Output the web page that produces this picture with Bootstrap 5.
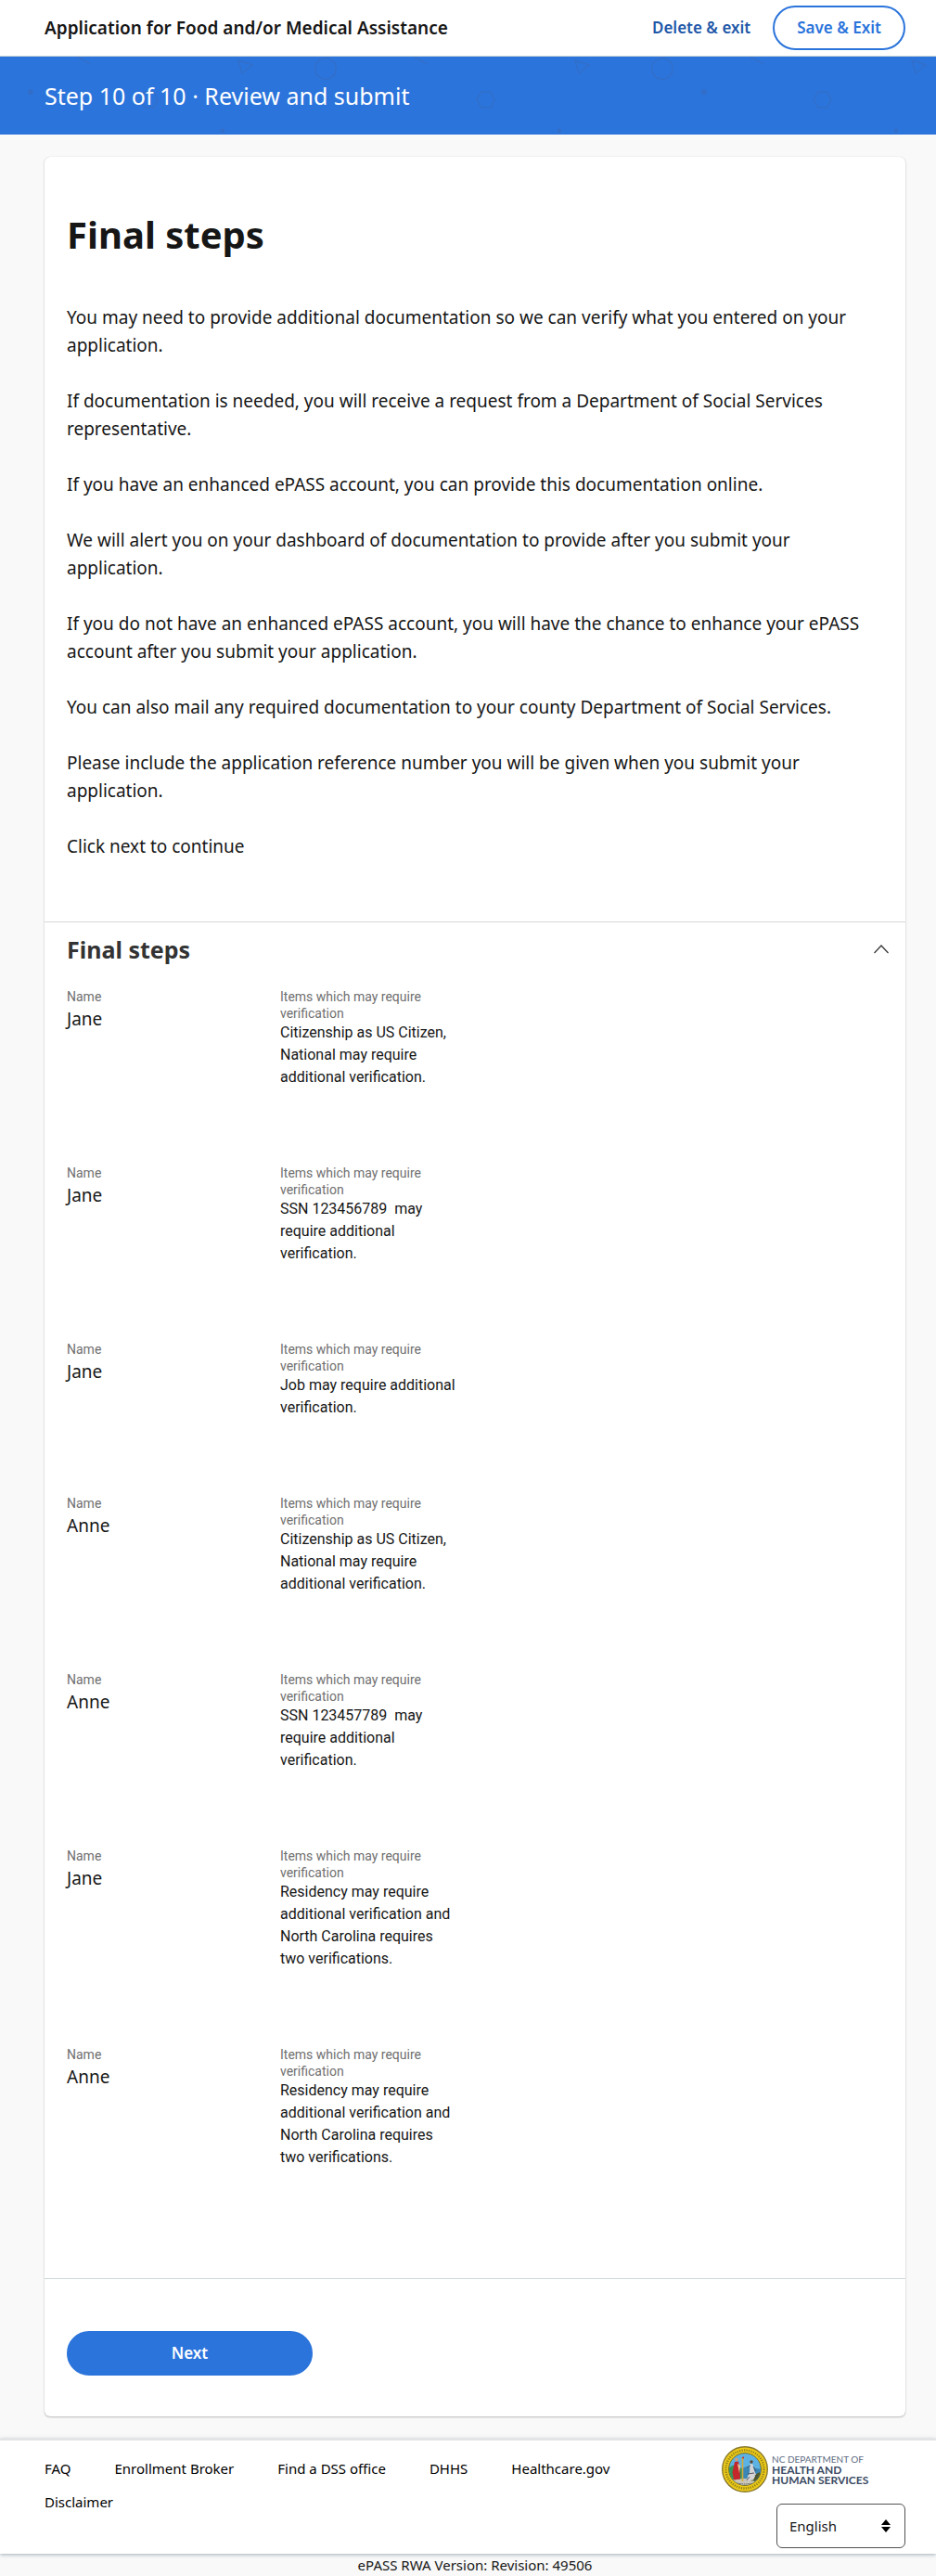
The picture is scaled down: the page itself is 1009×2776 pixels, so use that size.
<!DOCTYPE html>
<html lang="en">
<head>
<meta charset="utf-8">
<meta name="viewport" content="width=device-width, initial-scale=1">
<title>Application for Food and/or Medical Assistance</title>
<link href="https://cdn.jsdelivr.net/npm/bootstrap@5.3.0/dist/css/bootstrap.min.css" rel="stylesheet">
<style>
  :root { --brand: #2b74db; --brand-dark: #1f58a8; --ink: #161616; --rule: #cfd8d9; }
  body { font-family: "Noto Sans", sans-serif; font-size: 19px; line-height: 30px; color: var(--ink); background: #f9f9f9; }
  .page-gutter { padding-left: 48px; padding-right: 33px; }

  .app-header { min-height: 61px; border-bottom: 1px solid var(--rule); }
  .app-title { font-size: 19px; line-height: 30px; font-weight: 600; }
  .pill { height: 48px; border-radius: 24px; border: 2px solid var(--brand); font-size: 17px; line-height: 24px; font-weight: 600; padding: 0 24px; }
  .pill-outline, .pill-outline:hover { color: var(--brand); background: #fff; }
  .pill-solid { background: var(--brand); color: #fff; min-width: 265px; }
  .pill-solid:hover { background: var(--brand-dark); color: #fff; }
  .link-action { font-size: 17px; line-height: 24px; font-weight: 600; color: var(--brand-dark); text-decoration: none; }

  .step-banner { background: var(--brand); color: #fff; min-height: 84px; }
  .step-banner p { font-size: 25px; line-height: 36px; }

  .app-card { border: 0; border-radius: 6px; box-shadow: 0 1px 2px rgba(0, 0, 0, .24), 0 0 1px rgba(0, 0, 0, .2); }
  .intro { padding: 60px 24px 66px; }
  .intro h1 { font-size: 40px; line-height: 48px; font-weight: 700; margin-bottom: 50px; }
  .intro p { margin-bottom: 30px; }
  .section-steps { border-top: 1px solid #d6d6d6; padding: 9px 24px 36px; }
  .section-steps h2 { font-size: 25px; line-height: 40px; font-weight: 700; color: #333; }
  .chevron { width: 16px; margin-right: -6px; padding: 0; border: 0; background: none; }
  .entries { padding-top: 22px; }
  .entry { margin: 0 -40px 82px 0; }
  .entry > div { padding: 0 36px 0 0; }
  .entry dt { font-family: Roboto, sans-serif; font-size: 14px; line-height: 18px; font-weight: 400; color: #6f6f6f; }
  .entry dd { margin: 0; }
  .entry .detail { font-family: Roboto, sans-serif; font-size: 16px; line-height: 24px; }
  .actions { border-top: 1px solid var(--rule); padding: 56px 24px 44px; }

  .app-footer { border-top: 2px solid #e4e4e4; padding-top: 6px; padding-bottom: 6px; box-shadow: 0 1px 4px rgba(70, 100, 120, .5); }
  .footer-nav { column-gap: 47px; row-gap: 6px; padding-top: 9px; max-width: 75%; }
  .footer-nav a { font-size: 15px; line-height: 30px; color: #000; text-decoration: none; }
  .footer-side { width: 198px; row-gap: 12px; }
  .seal { width: 50px; height: 50px; }
  .dept { color: #3a4a63; font-family: Lato, sans-serif; font-size: 12px; line-height: 11px; }
  .dept .dept-top { font-size: 10px; color: #5d6b82; }
  .lang { height: 48px; border: 1px solid #525252; border-radius: 6px; font-size: 15px; color: var(--ink); background: #fff; padding: 0 13px; appearance: none; }
  .lang-wrap { width: 139px; }
  .lang-arrows { right: 15px; top: 17px; pointer-events: none; }
  .version { font-size: 15px; line-height: 24px; }
</style>
<script src="https://cdn.jsdelivr.net/npm/bootstrap@5.3.0/dist/js/bootstrap.bundle.min.js"></script>
</head>
<body>
<header class="app-header page-gutter bg-white d-flex align-items-center justify-content-between">
  <div class="app-title">Application for Food and/or Medical Assistance</div>
  <div class="d-flex align-items-center gap-4">
    <a class="link-action" href="#">Delete &amp; exit</a>
    <button type="button" class="btn pill pill-outline">Save &amp; Exit</button>
  </div>
</header>

<div class="step-banner page-gutter d-flex align-items-center position-relative">
  <svg class="position-absolute top-0 start-0 w-100 h-100" aria-hidden="true">
    <defs>
      <pattern id="shapes" width="363" height="84" patternUnits="userSpaceOnUse">
        <g fill="none" stroke="#316ec9" stroke-width="1.4">
          <path d="M83 0l14 8M257 4l15 5-11 9zM156 38h10l4 8-4 9h-10l-5-9z"/>
          <circle cx="351" cy="13" r="11.3"/>
        </g>
        <circle cx="33" cy="38" r="3" fill="#316ec9"/><circle cx="240" cy="80" r="2.4" fill="#316ec9"/>
      </pattern>
    </defs>
    <rect width="100%" height="100%" fill="url(#shapes)"/>
  </svg>
  <p class="mb-0 position-relative">Step 10 of 10 · Review and submit</p>
</div>

<main class="page-gutter py-4">
  <div class="card app-card">
    <section class="intro">
      <h1>Final steps</h1>
      <p>You may need to provide additional documentation so we can verify what you entered on your application.</p>
      <p>If documentation is needed, you will receive a request from a Department of Social Services representative.</p>
      <p>If you have an enhanced ePASS account, you can provide this documentation online.</p>
      <p>We will alert you on your dashboard of documentation to provide after you submit your application.</p>
      <p>If you do not have an enhanced ePASS account, you will have the chance to enhance your ePASS account after you submit your application.</p>
      <p>You can also mail any required documentation to your county Department of Social Services.</p>
      <p>Please include the application reference number you will be given when you submit your application.</p>
      <p class="mb-0">Click next to continue</p>
    </section>

    <section class="section-steps">
      <div class="d-flex align-items-center justify-content-between">
        <h2 class="mb-0">Final steps</h2>
        <button type="button" class="chevron d-flex" data-bs-toggle="collapse" data-bs-target="#entries" aria-expanded="true" aria-controls="entries" aria-label="Collapse Final steps">
          <svg width="16" height="10" viewBox="0 0 16 10" fill="none" stroke="#333" stroke-width="1.2"><path d="M.5 9L8 1l7.500 8"/></svg>
        </button>
      </div>
      <div class="entries collapse show" id="entries">
        <dl class="row entry"><div class="col-3"><dt>Name</dt><dd>Jane</dd></div><div class="col-3"><dt>Items which may require verification</dt><dd class="detail">Citizenship as US Citizen, National may require additional verification.</dd></div></dl>
        <dl class="row entry"><div class="col-3"><dt>Name</dt><dd>Jane</dd></div><div class="col-3"><dt>Items which may require verification</dt><dd class="detail">SSN 123456789&nbsp; may require additional verification.</dd></div></dl>
        <dl class="row entry"><div class="col-3"><dt>Name</dt><dd>Jane</dd></div><div class="col-3"><dt>Items which may require verification</dt><dd class="detail">Job may require additional verification.</dd></div></dl>
        <dl class="row entry"><div class="col-3"><dt>Name</dt><dd>Anne</dd></div><div class="col-3"><dt>Items which may require verification</dt><dd class="detail">Citizenship as US Citizen, National may require additional verification.</dd></div></dl>
        <dl class="row entry"><div class="col-3"><dt>Name</dt><dd>Anne</dd></div><div class="col-3"><dt>Items which may require verification</dt><dd class="detail">SSN 123457789&nbsp; may require additional verification.</dd></div></dl>
        <dl class="row entry"><div class="col-3"><dt>Name</dt><dd>Jane</dd></div><div class="col-3"><dt>Items which may require verification</dt><dd class="detail">Residency may require additional verification and North Carolina requires two verifications.</dd></div></dl>
        <dl class="row entry"><div class="col-3"><dt>Name</dt><dd>Anne</dd></div><div class="col-3"><dt>Items which may require verification</dt><dd class="detail">Residency may require additional verification and North Carolina requires two verifications.</dd></div></dl>
      </div>
    </section>

    <div class="actions d-flex">
      <button type="button" class="btn pill pill-solid">Next</button>
    </div>
  </div>
</main>

<footer>
  <div class="app-footer page-gutter bg-white d-flex justify-content-between position-relative">
    <nav class="footer-nav d-flex flex-wrap align-content-start" aria-label="Footer">
      <a href="#">FAQ</a>
      <a href="#">Enrollment Broker</a>
      <a href="#">Find a DSS office</a>
      <a href="#">DHHS</a>
      <a href="#">Healthcare.gov</a>
      <a href="#">Disclaimer</a>
    </nav>
    <div class="footer-side d-flex flex-column flex-shrink-0">
      <div class="d-flex align-items-center gap-1">
        <svg class="seal flex-shrink-0" viewBox="0 0 50 50" role="img" aria-label="State seal">
          <defs><clipPath id="disc"><circle cx="25" cy="25" r="17"/></clipPath></defs>
          <circle cx="25" cy="25" r="24.300" fill="#ecca18" stroke="#8a7a2c" stroke-width="1.400"/>
          <circle cx="25" cy="25" r="20.500" fill="none" stroke="#5c5420" stroke-width="2.400" stroke-dasharray="1.200 1.300" opacity=".65"/>
          <circle cx="25" cy="25" r="17.400" fill="#5cb2e2" stroke="#7a6b1d"/>
          <g clip-path="url(#disc)">
            <path d="M7 24q6-6 11-2l5 3v11H7z" fill="#35965a"/>
            <path d="M22 24q5-3 9-1l12 2v12H22z" fill="#3b86b5"/>
            <path d="M7 37q18-4 36 0v9H7z" fill="#c9c6b8"/>
            <path d="M32 33l9-5 2 6-6 4-7-1z" fill="#4f5a2a"/>
            <path d="M22.500 12v26" stroke="#d8a93a" stroke-width="1.600"/>
            <path d="M21.500 13l2-2 .6 2.600z" fill="#c3272b"/>
            <circle cx="16" cy="14.500" r="1.800" fill="#d59b74"/>
            <path d="M14 17l4-.5 1.500 8 .5 11-7 1-1.500-8z" fill="#c3272b"/>
            <path d="M17 19l3 2-1 8z" fill="#e6c9a0"/>
            <circle cx="32" cy="17" r="1.700" fill="#5b4638"/>
            <path d="M30.500 19l3 .5 1.500 7 2 4-3 6-7 1 1-5 2-4z" fill="#d5d5d8"/>
            <path d="M27 23l4-2M28 30l7-1M34 22l3 5M30 33l-3 4M36 31l2 4" stroke="#444b57" stroke-width=".9" fill="none"/>
            <path d="M17 40q8 2 16 0" stroke="#555" fill="none" stroke-dasharray="1.500 .8"/>
          </g>
        </svg>
        <div class="dept">
          <div class="dept-top">NC DEPARTMENT OF</div>
          <div class="fw-bold">HEALTH AND</div>
          <div class="fw-bold">HUMAN SERVICES</div>
        </div>
      </div>
      <div class="lang-wrap position-relative align-self-end">
        <select class="lang w-100" id="language" aria-label="Language"><option>English</option><option>Español</option></select>
        <svg class="lang-arrows position-absolute" width="12" height="14" viewBox="0 0 12 14" aria-hidden="true"><path d="M6 0l5 6H1zM6 14l5-6H1z"/></svg>
      </div>
    </div>
  </div>
  <div class="version page-gutter text-center">ePASS RWA Version: Revision: 49506</div>
</footer>
</body>
</html>
